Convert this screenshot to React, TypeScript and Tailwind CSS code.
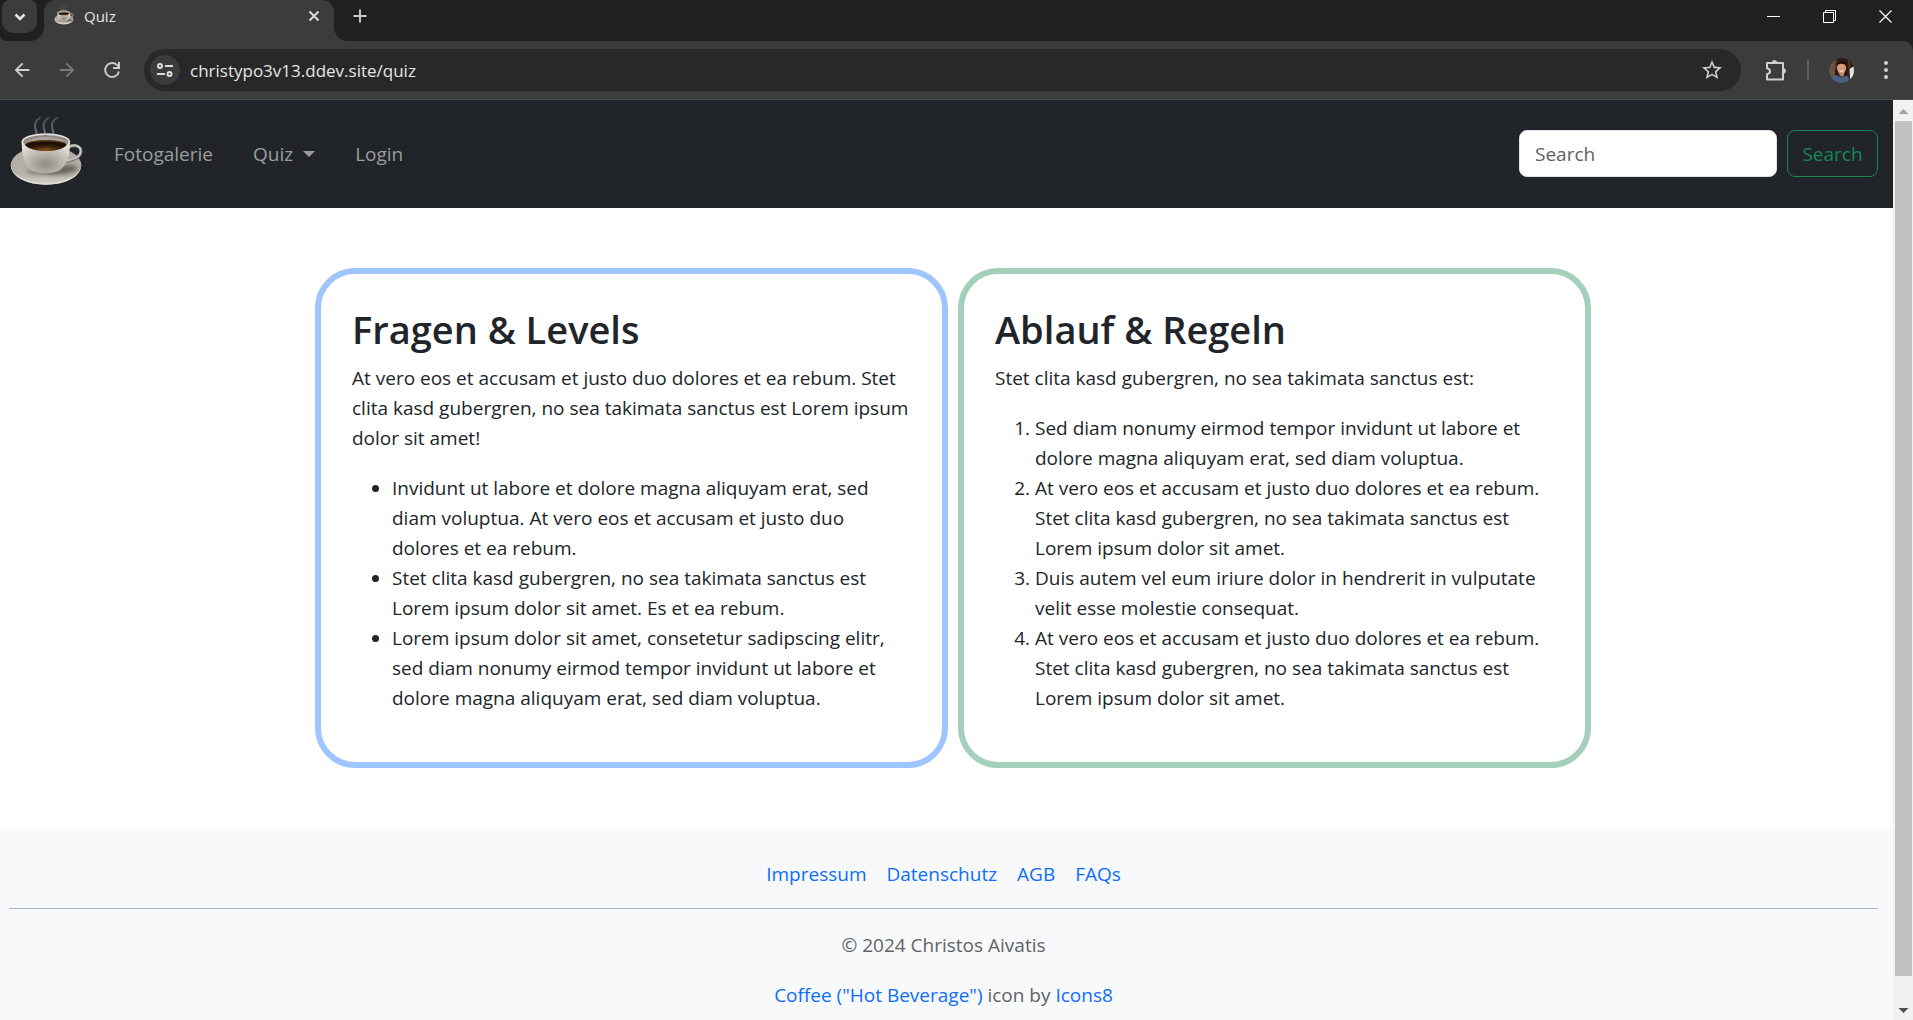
import React, { useId } from "react";
import { MdArrowBack, MdArrowForward, MdStarOutline } from "react-icons/md";

function CoffeeCup({ className }: { className: string }) {
  const id = useId();
  const cup = `${id}cup`;
  const saucer = `${id}saucer`;
  const drink = `${id}drink`;
  const steam = `${id}steam`;
  const soft = `${id}soft`;
  const blur = `${id}blur`;
  return (
    <svg viewBox="27 18 225 225" className={className} aria-hidden="true">
      <defs>
        <radialGradient id={cup} cx="0.5" cy="0.7" r="0.65">
          <stop offset="0" stopColor="#8f8a82" />
          <stop offset="0.5" stopColor="#b8b4ab" />
          <stop offset="1" stopColor="#e0ddd6" />
        </radialGradient>
        <linearGradient id={saucer} x1="0" y1="0" x2="0" y2="1">
          <stop offset="0" stopColor="#aeaba1" />
          <stop offset="0.7" stopColor="#b4b1a6" />
          <stop offset="1" stopColor="#d4d1c7" />
        </linearGradient>
        <radialGradient id={drink} cx="0.5" cy="0.9" r="0.6">
          <stop offset="0" stopColor="#8a5420" />
          <stop offset="0.55" stopColor="#3d210b" />
          <stop offset="1" stopColor="#1b0e05" />
        </radialGradient>
        <linearGradient id={steam} x1="0" y1="0" x2="0" y2="1">
          <stop offset="0" stopColor="#787c80" stopOpacity="0.45" />
          <stop offset="1" stopColor="#a0a2a5" stopOpacity="0.6" />
        </linearGradient>
        <filter id={soft} x="-30%" y="-60%" width="160%" height="220%">
          <feGaussianBlur stdDeviation="6" />
        </filter>
        <filter id={blur} x="-30%" y="-30%" width="160%" height="160%">
          <feGaussianBlur stdDeviation="1.3" />
        </filter>
      </defs>
      <ellipse cx="138" cy="166" rx="106" ry="58" fill={`url(#${saucer})`} />
      <path d="M33 168C36 204 84 224 138 224S240 204 243 168C236 202 188 218 138 218S40 202 33 168Z" fill="#dedbd2" />
      <ellipse cx="185" cy="179" rx="48" ry="13" fill="#514f4a" opacity="0.8" filter={`url(#${soft})`} transform="rotate(-5 185 179)" />
      <ellipse cx="125" cy="184" rx="45" ry="9" fill="#5d5a54" opacity="0.6" filter={`url(#${soft})`} />
      <path d="M204 113C222 101 244 108 243 126C242 142 222 148 202 154" fill="none" stroke="#77746d" strokeWidth="9" strokeLinecap="round" />
      <path d="M204 112C222 100 243 107 242 125C241 141 221 146 202 152" fill="none" stroke="#c9c6be" strokeWidth="6" strokeLinecap="round" />
      <path d="M65 96C65 145 78 172 99 184Q137 196 174 184C197 170 210 145 210 96Z" fill={`url(#${cup})`} />
      <ellipse cx="137.500" cy="95" rx="73" ry="25" fill="#e6e4df" />
      <ellipse cx="137.500" cy="96" rx="68" ry="21" fill="#8f8b84" />
      <path d="M74 103C80 87 115 81 138 81S195 87 201 103C190 118 165 123 138 123S85 118 74 103Z" fill="#aaa69f" />
      <path d="M75 105C79 95 110 91 138 91S197 95 200 105C189 118 165 123 138 123S86 118 75 105Z" fill={`url(#${drink})`} />
      <path d="M80 99C98 91 176 91 195 99" fill="none" stroke="#7b4d1d" strokeWidth="3" opacity="0.8" />
      <g fill="none" stroke={`url(#${steam})`} strokeWidth="6" strokeLinecap="round" filter={`url(#${blur})`}>
        <path d="M120 24C99 34 104 52 110 70" />
        <path d="M146 24C125 34 130 52 136 72" />
        <path d="M171 24C150 34 155 52 161 70" />
      </g>
    </svg>
  );
}

function TabStrip() {
  return (
    <div className="flex h-[41px] bg-[#3c3c3c]">
      <div className="w-11 shrink-0 rounded-br-[14px] rounded-bl-md bg-[#1f2120] pl-0.5">
        <button aria-label="Tabs durchsuchen" className="flex h-[33px] w-[35px] items-center justify-center rounded-[12px] rounded-t-lg bg-[#3c3c3c]">
          <svg viewBox="0 0 12 12" className="size-3" fill="none" stroke="#e8e8e8" strokeWidth="2.500">
            <path d="M1.500 3.500 6 8l4.500-4.500" />
          </svg>
        </button>
      </div>
      <div className="w-[290px] shrink-0 bg-[#1f2120]">
        <div className="flex h-full items-start rounded-t-[12px] bg-[#3c3c3c] pt-1 pr-3.5 pl-2.5">
          <CoffeeCup className="mt-0.5 size-5" />
          <span className="ml-2.5 flex-1 text-[15px] leading-6 text-[#e6e6e6]">Quiz</span>
          <button aria-label="Tab schließen" className="-mr-1.5 flex size-6 items-center justify-center">
            <svg viewBox="0 0 12 12" className="size-3" stroke="#dcdcdc" strokeWidth="2">
              <path d="m1.500 1.500 9 9m0-9-9 9" />
            </svg>
          </button>
        </div>
      </div>
      <div className="flex flex-1 items-start justify-between rounded-bl-[14px] bg-[#1f2120]">
        <button aria-label="Neuer Tab" className="ml-3.5 flex h-8 w-6 items-center justify-center">
          <svg viewBox="0 0 14 14" className="size-3.5" stroke="#c8c8c8" strokeWidth="2">
            <path d="M7 .5v13M.5 7h13" />
          </svg>
        </button>
        <div className="flex h-8">
          <button aria-label="Minimieren" className="flex w-14 items-center justify-center">
            <svg viewBox="0 0 13 13" className="size-[13px]" stroke="#fff"><path d="M0 6.500h13" /></svg>
          </button>
          <button aria-label="Verkleinern" className="flex w-14 items-center justify-center">
            <svg viewBox="0 0 13 13" className="size-[13px]" stroke="#fff" fill="none"><path d="M.5 2.500h10v10H.5zM2.500 2.500v-2h10v10h-2" /></svg>
          </button>
          <button aria-label="Schließen" className="flex w-14 items-center justify-center">
            <svg viewBox="0 0 13 13" className="size-[13px]" stroke="#fff" strokeWidth="1.200"><path d="m.5.5 12 12m0-12-12 12" /></svg>
          </button>
        </div>
      </div>
    </div>
  );
}

function Toolbar() {
  return (
    <div className="bg-[#1f2120]">
      <div className="flex h-[59px] items-center rounded-tr-[10px] border-b border-[#4b4d50] bg-[#3c3c3c]">
        <button aria-label="Zurück" className="ml-[9px] flex size-[26px] items-center justify-center">
          <MdArrowBack className="size-[22px] text-[#d0d0d0]" />
        </button>
        <button aria-label="Vorwärts" className="ml-[19px] flex size-[26px] items-center justify-center">
          <MdArrowForward className="size-[22px] text-[#7b7b7b]" />
        </button>
        <button aria-label="Neu laden" className="ml-[19px] flex size-[26px] items-center justify-center">
          <svg viewBox="0 0 18 18" className="size-[18px]" fill="none" stroke="#c8c8c8" strokeWidth="2">
            <path d="M16 10.500A7 7 0 1 1 14.200 4.100L16 6M16 1v6h-6" />
          </svg>
        </button>
        <div className="ml-[19px] flex h-[42px] flex-1 items-center rounded-full bg-[#282828] pr-[17px] pl-1.5">
          <button aria-label="Website-Informationen" className="flex size-[30px] items-center justify-center rounded-full bg-[#3c3c3c]">
            <svg viewBox="0 0 16 14" className="h-3.5 w-4" fill="none" stroke="#dedede" strokeWidth="2">
              <circle cx="3" cy="3" r="2" />
              <circle cx="12.500" cy="11" r="2" />
              <path d="M8 3h8M0 11h8" />
            </svg>
          </button>
          <input
            aria-label="Adressleiste"
            defaultValue="christypo3v13.ddev.site/quiz"
            className="ml-2.5 min-w-0 flex-1 bg-transparent pt-px text-[17px] text-[#e6e6e6] outline-none"
          />
          <button aria-label="Lesezeichen setzen">
            <MdStarOutline className="size-6 text-[#cfcfcf]" />
          </button>
        </div>
        <button aria-label="Erweiterungen" className="ml-6">
          <svg viewBox="0 0 22 22" className="size-[22px]" fill="none" stroke="#cfcfcf" strokeWidth="2" strokeLinejoin="round">
            <path d="M2 4h16v16.500H2v-5.300c4-1 4-5 0-6z" />
            <path d="M7 4a2.500 2.500 0 0 1 5 0zM18 9.500a2.500 2.500 0 0 1 0 5z" fill="#cfcfcf" strokeWidth="1" />
          </svg>
        </button>
        <span className="ml-5 h-5 w-0.5 bg-[#5f5f5f]" />
        <button aria-label="Profil" className="ml-5">
          <svg viewBox="0 0 50 50" className="size-[25px] overflow-hidden rounded-full">
            <rect width="50" height="50" fill="#2b1a14" />
            <path d="M0 0h12v50H0z" fill="#6b5542" />
            <path d="M12 0h5v22h-5zM38 0h5v20h-5z" fill="#4c3626" />
            <path d="M41 22l9-6v22l-8 4z" fill="#e4e2e0" />
            <path d="M0 50V40l14-6 10 5 12-4 10 15z" fill="#4b6182" />
            <path d="M18 33l7 7 8-8z" fill="#33415c" />
            <path d="M21 26h9v9l-4 3-5-4z" fill="#b57e62" />
            <ellipse cx="25" cy="20" rx="9" ry="12" fill="#d39a7a" />
            <path d="M15 17C13 2 36 2 35 17c-3-7-17-8-20 0z" fill="#1c110d" />
            <path d="M20 25q5 5 10 0z" fill="#f3e5dd" />
          </svg>
        </button>
        <button aria-label="Menü" className="mr-[25px] ml-[30px]">
          <svg viewBox="0 0 4 18" className="h-[18px] w-1" fill="#cfcfcf">
            <circle cx="2" cy="2" r="2" />
            <circle cx="2" cy="9" r="2" />
            <circle cx="2" cy="16" r="2" />
          </svg>
        </button>
      </div>
    </div>
  );
}

function Navbar() {
  return (
    <nav className="flex h-[108px] items-center bg-[#212529] pr-[15px] pb-0.5 pl-[9px] text-[#9b9d9e]">
      <a href="#start" aria-label="Startseite">
        <CoffeeCup className="size-[75px]" />
      </a>
      <div className="ml-[30px] flex items-center gap-10 pt-0.5">
        <a href="#fotogalerie">Fotogalerie</a>
        <button className="flex items-center gap-2.5">
          Quiz
          <span className="border-x-[6px] border-t-[6px] border-x-transparent border-t-[#9b9d9e]" />
        </button>
        <a href="#login">Login</a>
      </div>
      <form className="ml-auto flex gap-2.5" onSubmit={(e) => e.preventDefault()}>
        <input
          type="search"
          aria-label="Search"
          placeholder="Search"
          className="h-[47px] w-[258px] rounded-lg border border-[#dee2e6] bg-white px-[15px] pt-0.5 text-[#212529] placeholder:text-[#5d6166]"
        />
        <button className="h-[47px] w-[91px] rounded-lg border border-[#198754] pt-0.5 text-[#198754]">Search</button>
      </form>
    </nav>
  );
}

function Card({ title, intro, border, children }: { title: string; intro: string; border: string; children: React.ReactNode }) {
  return (
    <section className={`flex-1 rounded-[40px] border-[6px] px-[31px] pt-[31px] pb-[29px] text-[#212529] ${border}`}>
      <h2 className="mb-2.5 text-[38px] leading-[48px] font-semibold">{title}</h2>
      <p className="mb-5">{intro}</p>
      {children}
    </section>
  );
}

const facts = [
  "Invidunt ut labore et dolore magna aliquyam erat, sed diam voluptua. At vero eos et accusam et justo duo dolores et ea rebum.",
  "Stet clita kasd gubergren, no sea takimata sanctus est Lorem ipsum dolor sit amet. Es et ea rebum.",
  "Lorem ipsum dolor sit amet, consetetur sadipscing elitr, sed diam nonumy eirmod tempor invidunt ut labore et dolore magna aliquyam erat, sed diam voluptua.",
];

const rules = [
  "Sed diam nonumy eirmod tempor invidunt ut labore et dolore magna aliquyam erat, sed diam voluptua.",
  "At vero eos et accusam et justo duo dolores et ea rebum. Stet clita kasd gubergren, no sea takimata sanctus est Lorem ipsum dolor sit amet.",
  "Duis autem vel eum iriure dolor in hendrerit in vulputate velit esse molestie consequat.",
  "At vero eos et accusam et justo duo dolores et ea rebum. Stet clita kasd gubergren, no sea takimata sanctus est Lorem ipsum dolor sit amet.",
];

function Footer() {
  return (
    <footer className="flex-1 bg-[#f8f9fa] pt-[31px] pr-[15px] pl-[9px] text-center text-[#5f6266]">
      <div className="flex justify-center gap-5 border-b border-[#adb5bd] pb-[19px] text-[#0d6efd]">
        <a href="#impressum">Impressum</a>
        <a href="#datenschutz">Datenschutz</a>
        <a href="#agb">AGB</a>
        <a href="#faqs">FAQs</a>
      </div>
      <p className="mt-[21px]">© 2024 Christos Aivatis</p>
      <p className="mt-5">
        <a href="#coffee" className="text-[#0d6efd]">Coffee ("Hot Beverage")</a> icon by{" "}
        <a href="#icons8" className="text-[#0d6efd]">Icons8</a>
      </p>
    </footer>
  );
}

function Scrollbar() {
  return (
    <div className="flex w-5 shrink-0 flex-col items-center bg-[#f1f1f1]" aria-hidden="true">
      <svg viewBox="0 0 20 21" className="h-[21px] w-5" fill="#a3a3a3"><path d="m10.500 9 5 5h-10z" /></svg>
      <div className="w-[17px] flex-1 bg-[#c1c1c1]" />
      <svg viewBox="0 0 20 20" className="mt-6 h-5 w-5" fill="#505050"><path d="m10.500 13 5-5h-10z" /></svg>
    </div>
  );
}

export default function App() {
  return (
    <div className="flex h-screen flex-col overflow-hidden bg-white font-['Open_Sans','Noto_Sans',sans-serif]">
      <header className="shrink-0">
        <TabStrip />
        <Toolbar />
      </header>
      <div className="flex min-h-0 flex-1">
        <div className="flex min-w-0 flex-1 flex-col overflow-hidden text-[19px] leading-[30px]">
          <Navbar />
          <main className="py-[60px] pl-[13px]">
            <div className="mx-auto flex max-w-[1276px] gap-2.5">
              <Card
                title="Fragen & Levels"
                intro="At vero eos et accusam et justo duo dolores et ea rebum. Stet clita kasd gubergren, no sea takimata sanctus est Lorem ipsum dolor sit amet!"
                border="border-[#9ec5fe]"
              >
                <ul className="mb-5 list-disc pl-10">
                  {facts.map((text) => <li key={text}>{text}</li>)}
                </ul>
              </Card>
              <Card
                title="Ablauf & Regeln"
                intro="Stet clita kasd gubergren, no sea takimata sanctus est:"
                border="border-[#a3cfbb]"
              >
                <ol className="mb-5 list-decimal pl-10">
                  {rules.map((text, i) => <li key={i}>{text}</li>)}
                </ol>
              </Card>
            </div>
          </main>
          <Footer />
        </div>
        <Scrollbar />
      </div>
    </div>
  );
}
